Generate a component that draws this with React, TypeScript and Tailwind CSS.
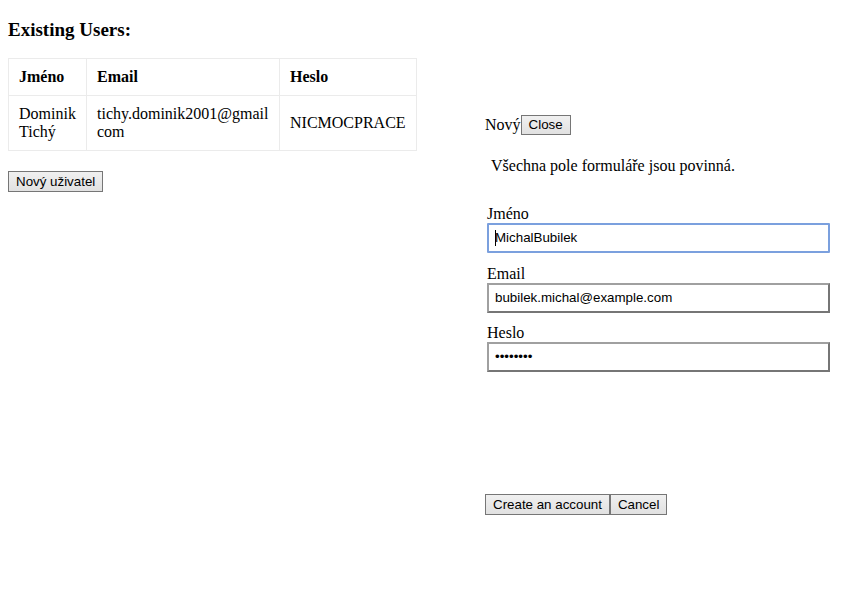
import React from "react";

const serif = "font-['Liberation_Serif','Times_New_Roman',serif]";
const btn =
  "font-['Liberation_Sans',Arial,sans-serif] text-[13.33px] leading-[16px] text-black bg-gradient-to-b from-[#f0f0f0] to-[#e1e1e1] border border-[#767676] px-[7px] py-[1px]";

export default function App() {
  return (
    <div className={`${serif} text-[16px] leading-[18px] text-black bg-white w-[854px] h-[593px] flex`}>
      <div className="w-[485px] pl-2 shrink-0">
        <h3 className="text-[19px] leading-[22px] font-bold mt-[19px]">Existing Users:</h3>
        <table className="mt-[17px] border-collapse table-fixed w-[409px]">
          <thead>
            <tr>
              <th className="w-[78px] border border-[#ebebeb] text-left font-bold px-[10px] py-[9px] align-middle">Jméno</th>
              <th className="w-[193px] border border-[#ebebeb] text-left font-bold px-[10px] py-[9px] align-middle">Email</th>
              <th className="w-[137px] border border-[#ebebeb] text-left font-bold px-[10px] py-[9px] align-middle">Heslo</th>
            </tr>
          </thead>
          <tbody>
            <tr>
              <td className="border border-[#ebebeb] px-[10px] py-[9px] align-middle">Dominik Tichý</td>
              <td className="border border-[#ebebeb] px-[10px] py-[9px] align-middle break-all">tichy.dominik2001@gmail com</td>
              <td className="border border-[#ebebeb] px-[10px] py-[9px] align-middle">NICMOCPRACE</td>
            </tr>
          </tbody>
        </table>
        <button className={`${btn} mt-[20px] block h-[21px]`}>Nový uživatel</button>
      </div>
      <div className="w-[347px] shrink-0 pt-[115px]">
        <div className="flex items-end h-[20px]">
          <span className="leading-[18px] pb-[1px]">Nový</span>
          <button className={`${btn} h-[20px]`}>Close</button>
        </div>
        <p className="mt-[22px] ml-[6px] leading-[18px]">Všechna pole formuláře jsou povinná.</p>
        <div className="mt-[30px] ml-[2px]">
          <label className="block leading-[18px]">Jméno</label>
          <div className="w-[343px] h-[30px] border-2 border-[#7ba0de] rounded-[1px] flex items-center px-[6px] font-['Liberation_Sans',Arial,sans-serif] text-[13.33px]">
            <span className="w-px h-[16px] bg-black mr-[-1px]"></span>
            MichalBubilek
          </div>
          <label className="block leading-[18px] mt-[12px]">Email</label>
          <div className="w-[343px] h-[30px] border-2 border-t-[#a0a0a0] border-l-[#a0a0a0] border-r-[#767676] border-b-[#767676] flex items-center px-[6px] font-['Liberation_Sans',Arial,sans-serif] text-[13.33px]">
            bubilek.michal@example.com
          </div>
          <label className="block leading-[18px] mt-[11px]">Heslo</label>
          <div className="w-[343px] h-[30px] border-2 border-t-[#a0a0a0] border-l-[#a0a0a0] border-r-[#767676] border-b-[#767676] flex items-center px-[6px] font-['Liberation_Sans',Arial,sans-serif] text-[13.33px]">
            ••••••••
          </div>
        </div>
        <div className="mt-[122px] flex">
          <button className={`${btn} h-[21px]`}>Create an account</button>
          <button className={`${btn} h-[21px]`}>Cancel</button>
        </div>
      </div>
    </div>
  );
}
